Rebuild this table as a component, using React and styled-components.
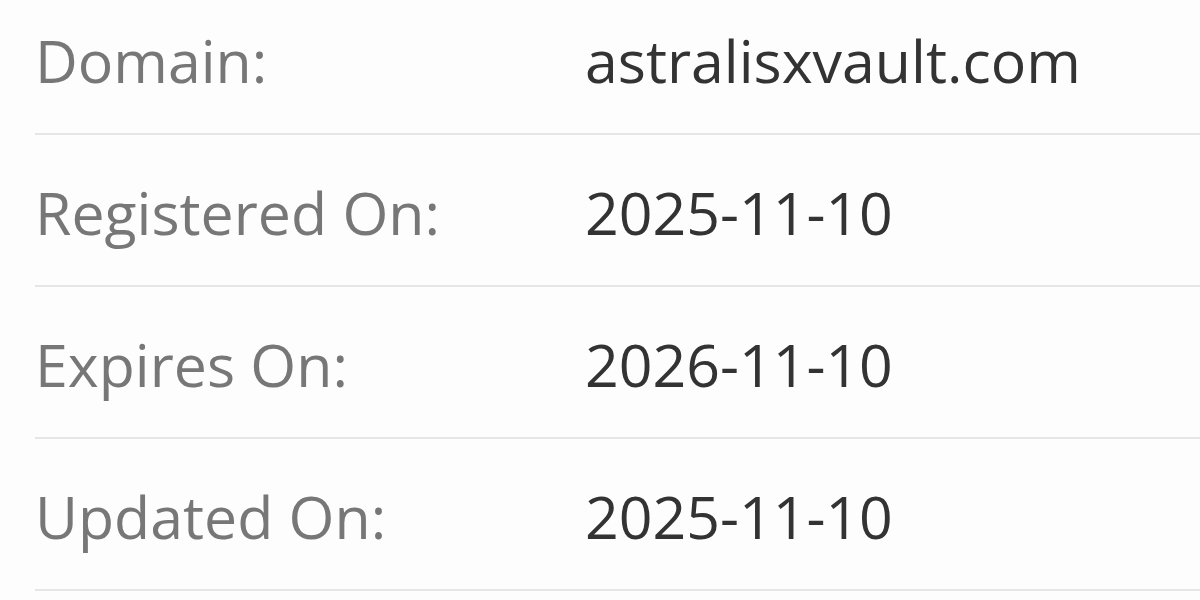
import React from "react";
import styled, { createGlobalStyle } from "styled-components";

const GlobalStyle = createGlobalStyle`
  html, body {
    margin: 0;
    padding: 0;
    background: #fdfdfd;
    overflow: hidden;
  }
  body {
    font-family: "Open Sans", "Noto Sans", sans-serif;
  }
`;

const Page = styled.div`
  width: 1200px;
  height: 600px;
  overflow: hidden;
  padding-left: 35px;
  box-sizing: border-box;
`;

const InfoList = styled.dl`
  margin: -17px 0 0 0;
  padding: 0;
`;

const Row = styled.div`
  display: grid;
  grid-template-columns: 550px 1fr;
  align-items: center;
  padding: 37px 0 33px;
  border-bottom: 2px solid #e6e6e6;
`;

const Label = styled.dt`
  margin: 0;
  font-size: 59px;
  line-height: 80px;
  color: #777777;
`;

const Value = styled.dd`
  margin: 0;
  font-size: 59px;
  line-height: 80px;
  color: #333333;
`;

const rows = [
  { label: "Domain:", value: "astralisxvault.com" },
  { label: "Registered On:", value: "2025-11-10" },
  { label: "Expires On:", value: "2026-11-10" },
  { label: "Updated On:", value: "2025-11-10" },
];

export default function App() {
  return (
    <Page>
      <GlobalStyle />
      <InfoList>
        {rows.map((r) => (
          <Row key={r.label}>
            <Label>{r.label}</Label>
            <Value>{r.value}</Value>
          </Row>
        ))}
      </InfoList>
    </Page>
  );
}
